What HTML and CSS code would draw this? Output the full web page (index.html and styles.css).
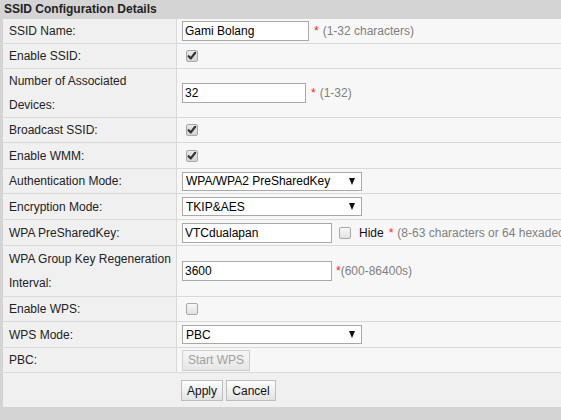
FILE: index.html
```html
<!DOCTYPE html>
<html>
<head>
<meta charset="utf-8">
<link rel="stylesheet" href="styles.css">
</head>
<body>
<div class="page">
  <div class="title">SSID Configuration Details</div>
  <div class="form">
    <div class="lbl">SSID Name:</div>
    <div class="val"><input class="txt w127" type="text" value="Gami Bolang"><span class="req">*</span><span class="hint">(1-32 characters)</span></div>

    <div class="lbl">Enable SSID:</div>
    <div class="val"><span class="cb on"><svg viewBox="0 0 12 12" width="12" height="12"><path d="M2.6 6.2 L4.8 8.4 L9.2 2.8" fill="none" stroke="#333" stroke-width="2.2" stroke-linecap="round" stroke-linejoin="round"/></svg></span></div>

    <div class="lbl">Number of Associated Devices:</div>
    <div class="val"><input class="txt w124" type="text" value="32"><span class="req">*</span><span class="hint">(1-32)</span></div>

    <div class="lbl">Broadcast SSID:</div>
    <div class="val"><span class="cb on"><svg viewBox="0 0 12 12" width="12" height="12"><path d="M2.6 6.2 L4.8 8.4 L9.2 2.8" fill="none" stroke="#333" stroke-width="2.2" stroke-linecap="round" stroke-linejoin="round"/></svg></span></div>

    <div class="lbl">Enable WMM:</div>
    <div class="val"><span class="cb on"><svg viewBox="0 0 12 12" width="12" height="12"><path d="M2.6 6.2 L4.8 8.4 L9.2 2.8" fill="none" stroke="#333" stroke-width="2.2" stroke-linecap="round" stroke-linejoin="round"/></svg></span></div>

    <div class="lbl">Authentication Mode:</div>
    <div class="val"><span class="sel"><select><option>WPA/WPA2 PreSharedKey</option></select></span></div>

    <div class="lbl">Encryption Mode:</div>
    <div class="val"><span class="sel"><select><option>TKIP&amp;AES</option></select></span></div>

    <div class="lbl">WPA PreSharedKey:</div>
    <div class="val"><input class="txt w150" type="text" value="VTCdualapan"><span class="cb off hidebox"></span><span class="hide">Hide</span><span class="req">*</span><span class="hint">(8-63 characters or 64 hexadecimal characters)</span></div>

    <div class="lbl">WPA Group Key Regeneration Interval:</div>
    <div class="val"><input class="txt w150" type="text" value="3600"><span class="req tight">*</span><span class="hint nogap">(600-86400s)</span></div>

    <div class="lbl">Enable WPS:</div>
    <div class="val"><span class="cb off"></span></div>

    <div class="lbl">WPS Mode:</div>
    <div class="val"><span class="sel"><select><option>PBC</option></select></span></div>

    <div class="lbl">PBC:</div>
    <div class="val"><button class="btn dis" disabled>Start WPS</button></div>
  </div>
  <div class="actions">
    <button class="btn apply">Apply</button><button class="btn cancel">Cancel</button>
  </div>
</div>
</body>
</html>
```

FILE: styles.css
```css
html, body {
  margin: 0;
  padding: 0;
}
body {
  background: #d4d4d4;
  font-family: "Liberation Sans", Arial, sans-serif;
  font-size: 12px;
  color: #222;
  overflow: hidden;
  width: 561px;
  height: 420px;
}
.page {
  width: 561px;
}
.title {
  height: 19px;
  line-height: 19px;
  padding-left: 4px;
  font-weight: bold;
  color: #222;
}
.form {
  margin-left: 3px;
  display: grid;
  grid-template-columns: 174px 1fr;
  grid-template-rows: 25px 25px 49px 25px 26px 25px 26px 26px 51px 25px 26px 25px;
}
.lbl {
  box-sizing: border-box;
  background: #f0f0f0;
  border-right: 1px solid #d9d9d9;
  border-bottom: 1px solid #d9d9d9;
  padding: 0 4px 0 6px;
  line-height: 24px;
  display: flex;
  align-items: center;
  color: #222;
}
.val {
  box-sizing: border-box;
  background: #f7f7f7;
  border-bottom: 1px solid #d9d9d9;
  padding-left: 5px;
  display: flex;
  align-items: center;
  white-space: nowrap;
  overflow: hidden;
  min-width: 0;
}
.val > * {
  flex: none;
}
.txt {
  box-sizing: border-box;
  height: 20px;
  border: 1px solid #a9a9a9;
  background: #fff;
  font-family: "Liberation Sans", Arial, sans-serif;
  font-size: 12px;
  color: #000;
  padding: 0 2px;
  margin: 0;
  outline: none;
}
.w127 { width: 127px; }
.w124 { width: 124px; }
.w150 { width: 150px; }
.req {
  color: #f22;
  margin-left: 5px;
  margin-right: 4px;
}
.req.tight {
  margin-left: 4px;
  margin-right: 0;
}
.hint {
  color: #808080;
}
.cb {
  box-sizing: border-box;
  width: 12px;
  height: 12px;
  border: 1px solid #a8a8a8;
  border-radius: 2px;
  margin-left: 4px;
  display: inline-flex;
  align-items: center;
  justify-content: center;
  overflow: hidden;
}
.cb svg {
  display: block;
  flex: none;
}
.cb.on {
  background: linear-gradient(#e8e8e8, #d4d4d4);
}
.cb.off {
  background: linear-gradient(#f8f8f8, #e2e2e2);
}
.cb.hidebox {
  margin-left: 7px;
}
.hide {
  margin-left: 8px;
  color: #111;
}
.sel {
  position: relative;
  display: inline-block;
  width: 180px;
  height: 19px;
}
.sel select {
  -webkit-appearance: none;
  appearance: none;
  box-sizing: border-box;
  width: 180px;
  height: 19px;
  border: 1px solid #a9a9a9;
  border-radius: 0;
  background: #fff;
  font-family: "Liberation Sans", Arial, sans-serif;
  font-size: 12px;
  color: #000;
  padding: 0 0 0 3px;
  margin: 0;
  outline: none;
}
.sel::after {
  content: "";
  position: absolute;
  right: 7px;
  top: 6px;
  width: 0;
  height: 0;
  border-left: 3.5px solid transparent;
  border-right: 3.5px solid transparent;
  border-top: 7px solid #111;
  pointer-events: none;
}
.btn {
  box-sizing: border-box;
  height: 21px;
  border: 1px solid #bdbdbd;
  background: linear-gradient(#fdfdfd, #e3e3e3);
  font-family: "Liberation Sans", Arial, sans-serif;
  font-size: 12px;
  color: #111;
  padding: 0;
  margin: 0;
  border-radius: 0;
}
.btn.dis {
  width: 68px;
  color: #a0a0a0;
  border-color: #cfcfcf;
  background: linear-gradient(#f6f6f6, #e6e6e6);
}
.actions {
  background: #f0f0f0;
  margin-left: 3px;
  height: 34px;
  box-sizing: border-box;
  padding: 7px 0 0 178px;
  display: flex;
  align-items: flex-start;
}
.apply {
  width: 42px;
  margin-right: 3px;
}
.cancel {
  width: 50px;
}
```
